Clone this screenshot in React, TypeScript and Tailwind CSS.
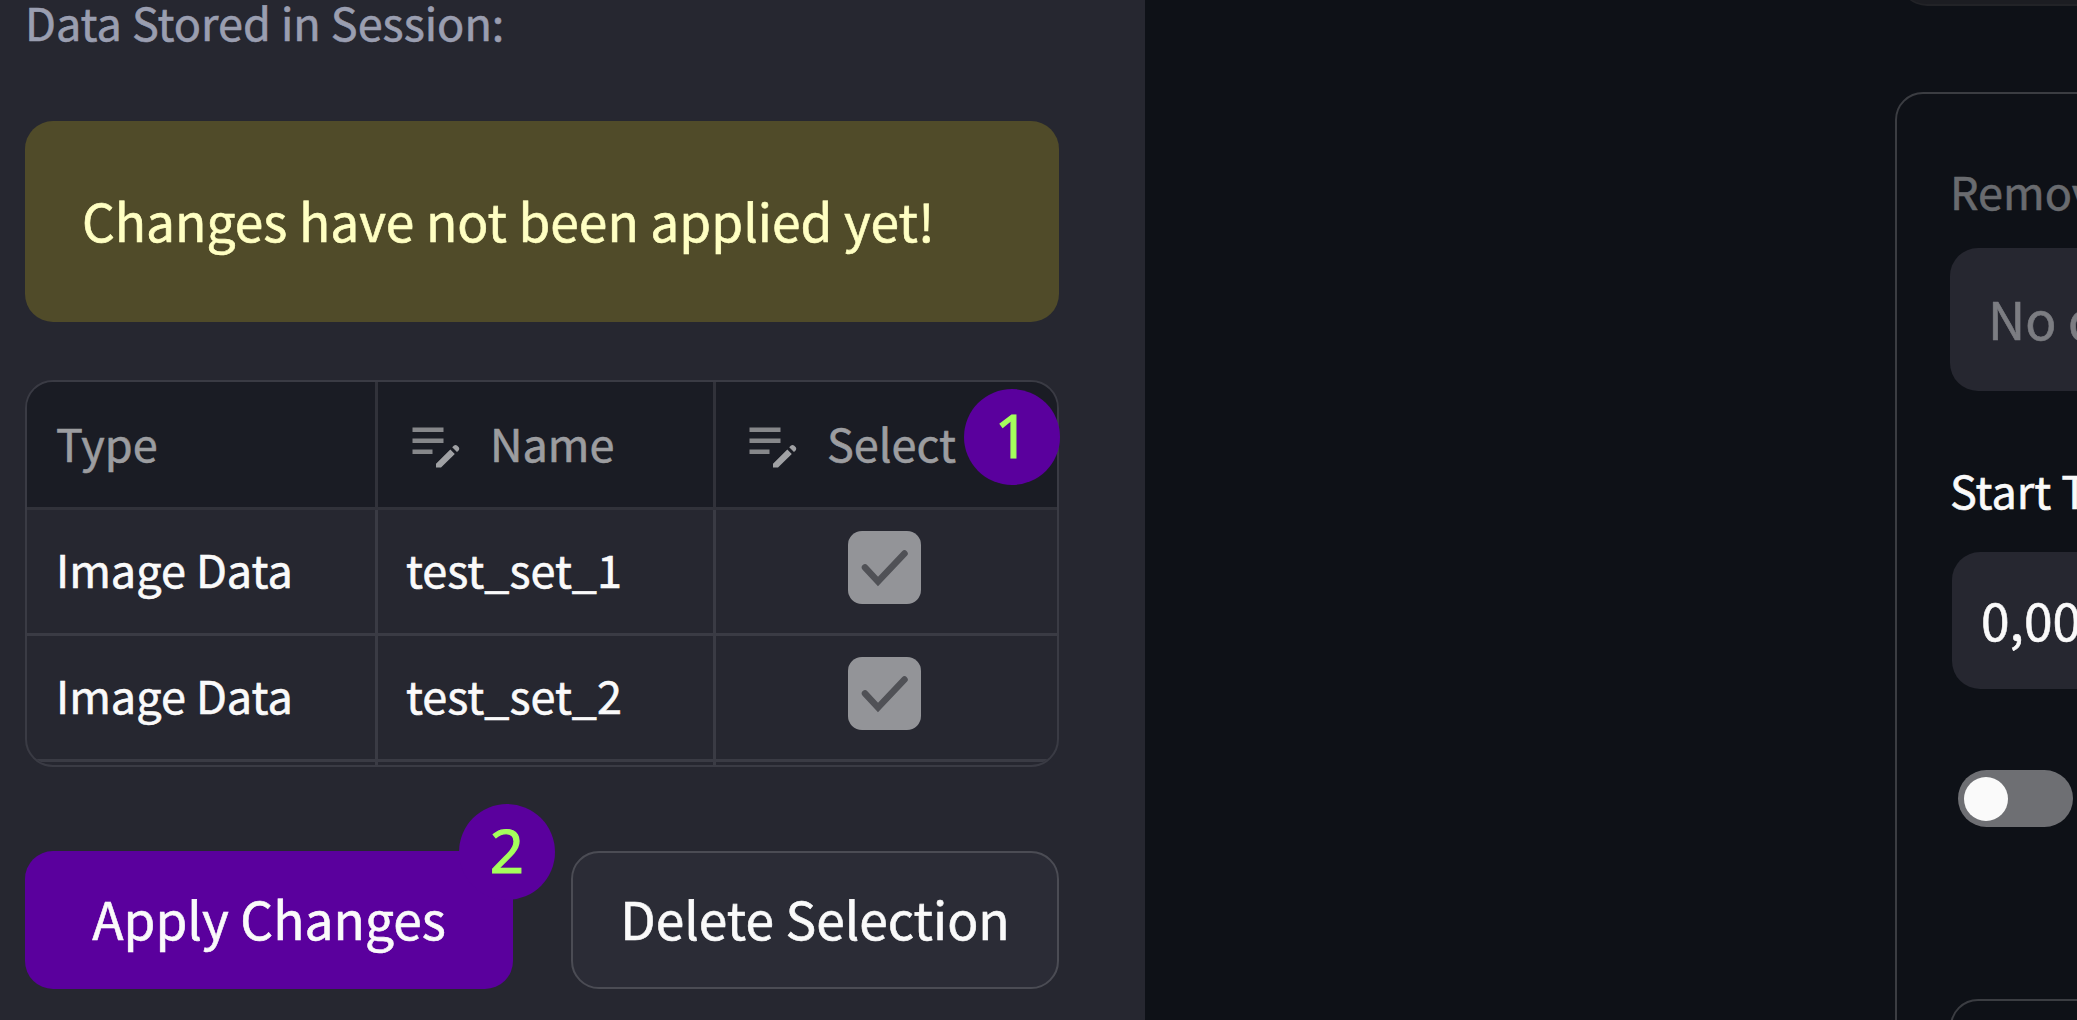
import React from "react";

type Row = { type: string; name: string };

const rows: Row[] = [
  { type: "Image Data", name: "test_set_1" },
  { type: "Image Data", name: "test_set_2" },
];

function EditIcon() {
  return (
    <svg className="mt-[12px] h-[44px] w-[51px] shrink-0" viewBox="0 0 51 44" fill="none">
      <path d="M0.500 2.800H31.500M0.500 13.800H31.500M0.500 24.800H20.500" stroke="#86878a" strokeWidth="4.600" />
      <path d="M24 40.500v-3.800L38.300 22.400l4.500 4.500L29 40.500zM40.200 20.300l1.800-1.800q1.500-1 3 0l1.800 1.800q1 1.500 0 3l-1.800 1.800z" fill="#a0a1a4" />
    </svg>
  );
}

function Checked() {
  return (
    <svg className="h-[73px] w-[73px]" viewBox="0 0 73 73" fill="none">
      <rect width="73" height="73" rx="14" fill="#939498" />
      <path d="M17 36.500L30 50.500L56.500 22.500" stroke="#505156" strokeWidth="6.500" strokeLinecap="round" />
    </svg>
  );
}

function Step({ n }: { n: number }) {
  return (
    <span className="flex size-[96px] items-center justify-center rounded-full bg-[#5a009d] font-['Open_Sans',sans-serif] text-[60px] leading-none font-medium text-[#a5ff5c] [-webkit-text-stroke:1.200px_#a5ff5c]">
      <span className="-mt-[4px]">{n}</span>
    </span>
  );
}

export default function App() {
  return (
    <div className="flex h-[1020px] w-[2077px] overflow-hidden bg-[#0e1117] font-['Noto_Sans_CJK_SC',sans-serif] whitespace-nowrap text-[#fafafa] [-webkit-text-stroke-width:0.6px]">
      <aside className="flex h-full w-[1145px] shrink-0 flex-col bg-[#262730] pr-[86px] pl-[25px]">
        <div className="h-[121px] text-[45px] leading-[44px] text-[#9a9eb0]">Data Stored in Session:</div>
        <div className="flex h-[201px] items-center rounded-[28px] bg-[#504b29] pb-[4px] pl-[57px] text-[51.5px] leading-[60px] text-[#ffffc2]">
          Changes have not been applied yet!
        </div>
        <div className="relative mt-[58px] h-[387px]">
          <div className="h-full overflow-hidden rounded-[28px] border-2 border-[#3a3b44] text-[45px] leading-[60px]">
            <div className="grid h-[128px] grid-cols-[351px_338px_1fr] border-b-3 border-[#31323a] bg-[#1a1c24] text-[#9c9da0]">
              <div className="flex items-center border-r-3 border-[#31323a] pb-[3px] pl-[29px]">Type</div>
              <div className="flex items-center gap-[27px] border-r-3 border-[#31323a] pb-[3px] pl-[34px]"><EditIcon />Name</div>
              <div className="flex items-center gap-[27px] pb-[3px] pl-[33px]"><EditIcon />Select</div>
            </div>
            {rows.map((r) => (
              <div key={r.name} className="grid h-[126px] grid-cols-[351px_338px_1fr] border-b-3 border-[#3a3b44]">
                <div className="flex items-center border-r-3 border-[#3a3b44] pb-[6px] pl-[29px]">{r.type}</div>
                <div className="flex items-center border-r-3 border-[#3a3b44] pb-[6px] pl-[28px]">{r.name}</div>
                <div className="flex items-center justify-center pr-[4px] pb-[8px]"><Checked /></div>
              </div>
            ))}
            <div className="grid h-[6px] grid-cols-[351px_338px_1fr]">
              <div className="border-r-3 border-[#3a3b44]" />
              <div className="border-r-3 border-[#3a3b44]" />
            </div>
          </div>
          <div className="absolute top-[9px] -right-px"><Step n={1} /></div>
        </div>
        <div className="mt-[84px] flex h-[138px] gap-[58px] text-[51.5px] leading-[60px]">
          <button className="relative flex w-[488px] items-center justify-center rounded-[28px] bg-[#5a009d] pb-[4px]">
            Apply Changes
            <span className="absolute -top-[47px] -right-[42px]"><Step n={2} /></span>
          </button>
          <button className="flex w-[488px] items-center justify-center rounded-[28px] border-2 border-[#4b4c54] bg-[#2b2c36] pb-[4px]">Delete Selection</button>
        </div>
      </aside>
      <main className="flex min-w-0 flex-1 flex-col overflow-hidden pl-[750px]">
        <div className="-mt-[60px] ml-[4px] h-[66px] w-[400px] shrink-0 rounded-bl-[28px] border-b-2 border-[#222327] bg-[#1c1d22]" />
        <section className="mt-[86px] h-[1000px] w-[600px] shrink-0 rounded-[28px] border-2 border-[#3b3d42] pl-[53px]">
          <div className="mt-[67px] text-[45px] leading-[60px] text-[#696b6f]">Remove</div>
          <div className="mt-[27px] flex h-[143px] items-center rounded-[28px] bg-[#262730] pb-[3px] pl-[38px] text-[51.5px] leading-[60px] text-[#7c7d82]">No data</div>
          <div className="mt-[69px] text-[45px] leading-[60px]">Start Time</div>
          <div className="mt-[32px] ml-[2px] flex h-[137px] items-center rounded-[28px] bg-[#262730] pb-[4px] pl-[29px] text-[51.5px] leading-[60px]">0,00</div>
          <div className="mt-[81px] ml-[8px] flex h-[57px] w-[115px] items-center rounded-full bg-[#6e6f73] pl-[6px]">
            <div className="size-[44px] rounded-full bg-[#fafafa]" />
          </div>
          <div className="mt-[172px] h-[150px] rounded-[28px] border-2 border-[#3b3d42]" />
        </section>
      </main>
    </div>
  );
}
